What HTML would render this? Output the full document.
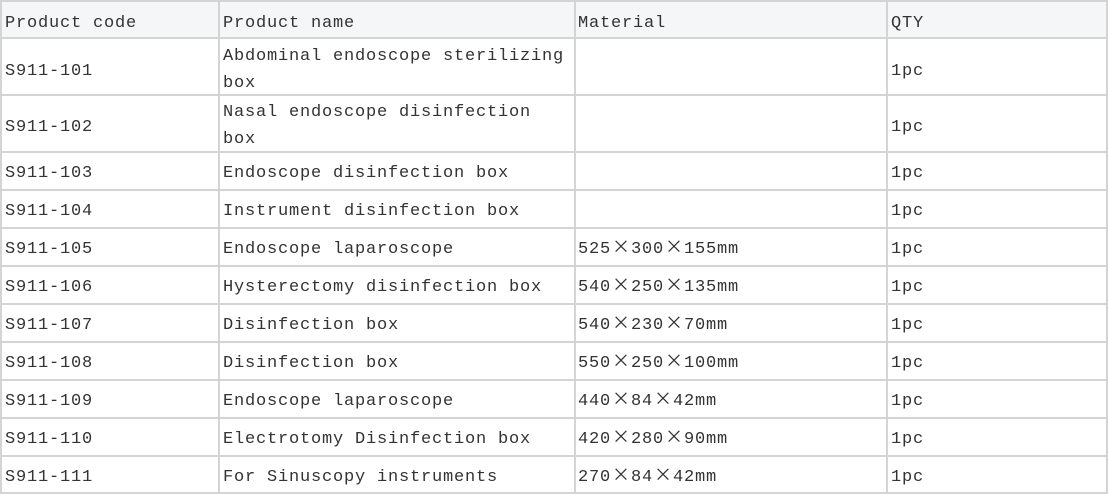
<!DOCTYPE html>
<html><head><meta charset="utf-8"><style>
body{margin:0;width:1109px;height:494px;background:#fff;overflow:hidden;position:relative;font-family:"Liberation Mono","Noto Sans CJK SC",monospace;font-size:17px;letter-spacing:0.8px;color:#333}
.h{position:absolute;left:0;width:1108px;height:2px;background:#d4d4d4}
.v{position:absolute;top:0;width:2px;height:494px;background:#d4d4d4}
.t{position:absolute;white-space:nowrap;line-height:27px;margin-top:2px}
.x{font-family:"Noto Sans CJK SC",sans-serif;letter-spacing:0;font-size:18px;line-height:0;padding:0 1px}
.hd{position:absolute;left:0;top:0;width:1108px;height:37px;background:#f5f6f8}
</style></head><body>
<div class="hd"></div>
<div class="h" style="top:0"></div>
<div class="h" style="top:37px"></div>
<div class="h" style="top:94px"></div>
<div class="h" style="top:151px"></div>
<div class="h" style="top:189px"></div>
<div class="h" style="top:227px"></div>
<div class="h" style="top:265px"></div>
<div class="h" style="top:303px"></div>
<div class="h" style="top:341px"></div>
<div class="h" style="top:379px"></div>
<div class="h" style="top:417px"></div>
<div class="h" style="top:455px"></div>
<div class="h" style="top:492px"></div>
<div class="v" style="left:0"></div>
<div class="v" style="left:218px"></div>
<div class="v" style="left:574px"></div>
<div class="v" style="left:886px"></div>
<div class="v" style="left:1106px"></div>

<div class="t" style="left:5px;top:8px">Product code</div>
<div class="t" style="left:223px;top:8px">Product name</div>
<div class="t" style="left:578px;top:8px">Material</div>
<div class="t" style="left:891px;top:8px">QTY</div>

<div class="t" style="left:5px;top:56px">S911-101</div>
<div class="t" style="left:223px;top:41px">Abdominal endoscope sterilizing<br>box</div>
<div class="t" style="left:891px;top:56px">1pc</div>

<div class="t" style="left:5px;top:112px">S911-102</div>
<div class="t" style="left:223px;top:97px">Nasal endoscope disinfection<br>box</div>
<div class="t" style="left:891px;top:112px">1pc</div>

<div class="t" style="left:5px;top:158px">S911-103</div>
<div class="t" style="left:223px;top:158px">Endoscope disinfection box</div>
<div class="t" style="left:891px;top:158px">1pc</div>

<div class="t" style="left:5px;top:196px">S911-104</div>
<div class="t" style="left:223px;top:196px">Instrument disinfection box</div>
<div class="t" style="left:891px;top:196px">1pc</div>

<div class="t" style="left:5px;top:234px">S911-105</div>
<div class="t" style="left:223px;top:234px">Endoscope laparoscope</div>
<div class="t" style="left:578px;top:234px">525<span class="x">×</span>300<span class="x">×</span>155mm</div>
<div class="t" style="left:891px;top:234px">1pc</div>

<div class="t" style="left:5px;top:272px">S911-106</div>
<div class="t" style="left:223px;top:272px">Hysterectomy disinfection box</div>
<div class="t" style="left:578px;top:272px">540<span class="x">×</span>250<span class="x">×</span>135mm</div>
<div class="t" style="left:891px;top:272px">1pc</div>

<div class="t" style="left:5px;top:310px">S911-107</div>
<div class="t" style="left:223px;top:310px">Disinfection box</div>
<div class="t" style="left:578px;top:310px">540<span class="x">×</span>230<span class="x">×</span>70mm</div>
<div class="t" style="left:891px;top:310px">1pc</div>

<div class="t" style="left:5px;top:348px">S911-108</div>
<div class="t" style="left:223px;top:348px">Disinfection box</div>
<div class="t" style="left:578px;top:348px">550<span class="x">×</span>250<span class="x">×</span>100mm</div>
<div class="t" style="left:891px;top:348px">1pc</div>

<div class="t" style="left:5px;top:386px">S911-109</div>
<div class="t" style="left:223px;top:386px">Endoscope laparoscope</div>
<div class="t" style="left:578px;top:386px">440<span class="x">×</span>84<span class="x">×</span>42mm</div>
<div class="t" style="left:891px;top:386px">1pc</div>

<div class="t" style="left:5px;top:424px">S911-110</div>
<div class="t" style="left:223px;top:424px">Electrotomy Disinfection box</div>
<div class="t" style="left:578px;top:424px">420<span class="x">×</span>280<span class="x">×</span>90mm</div>
<div class="t" style="left:891px;top:424px">1pc</div>

<div class="t" style="left:5px;top:462px">S911-111</div>
<div class="t" style="left:223px;top:462px">For Sinuscopy instruments</div>
<div class="t" style="left:578px;top:462px">270<span class="x">×</span>84<span class="x">×</span>42mm</div>
<div class="t" style="left:891px;top:462px">1pc</div>
</body></html>
